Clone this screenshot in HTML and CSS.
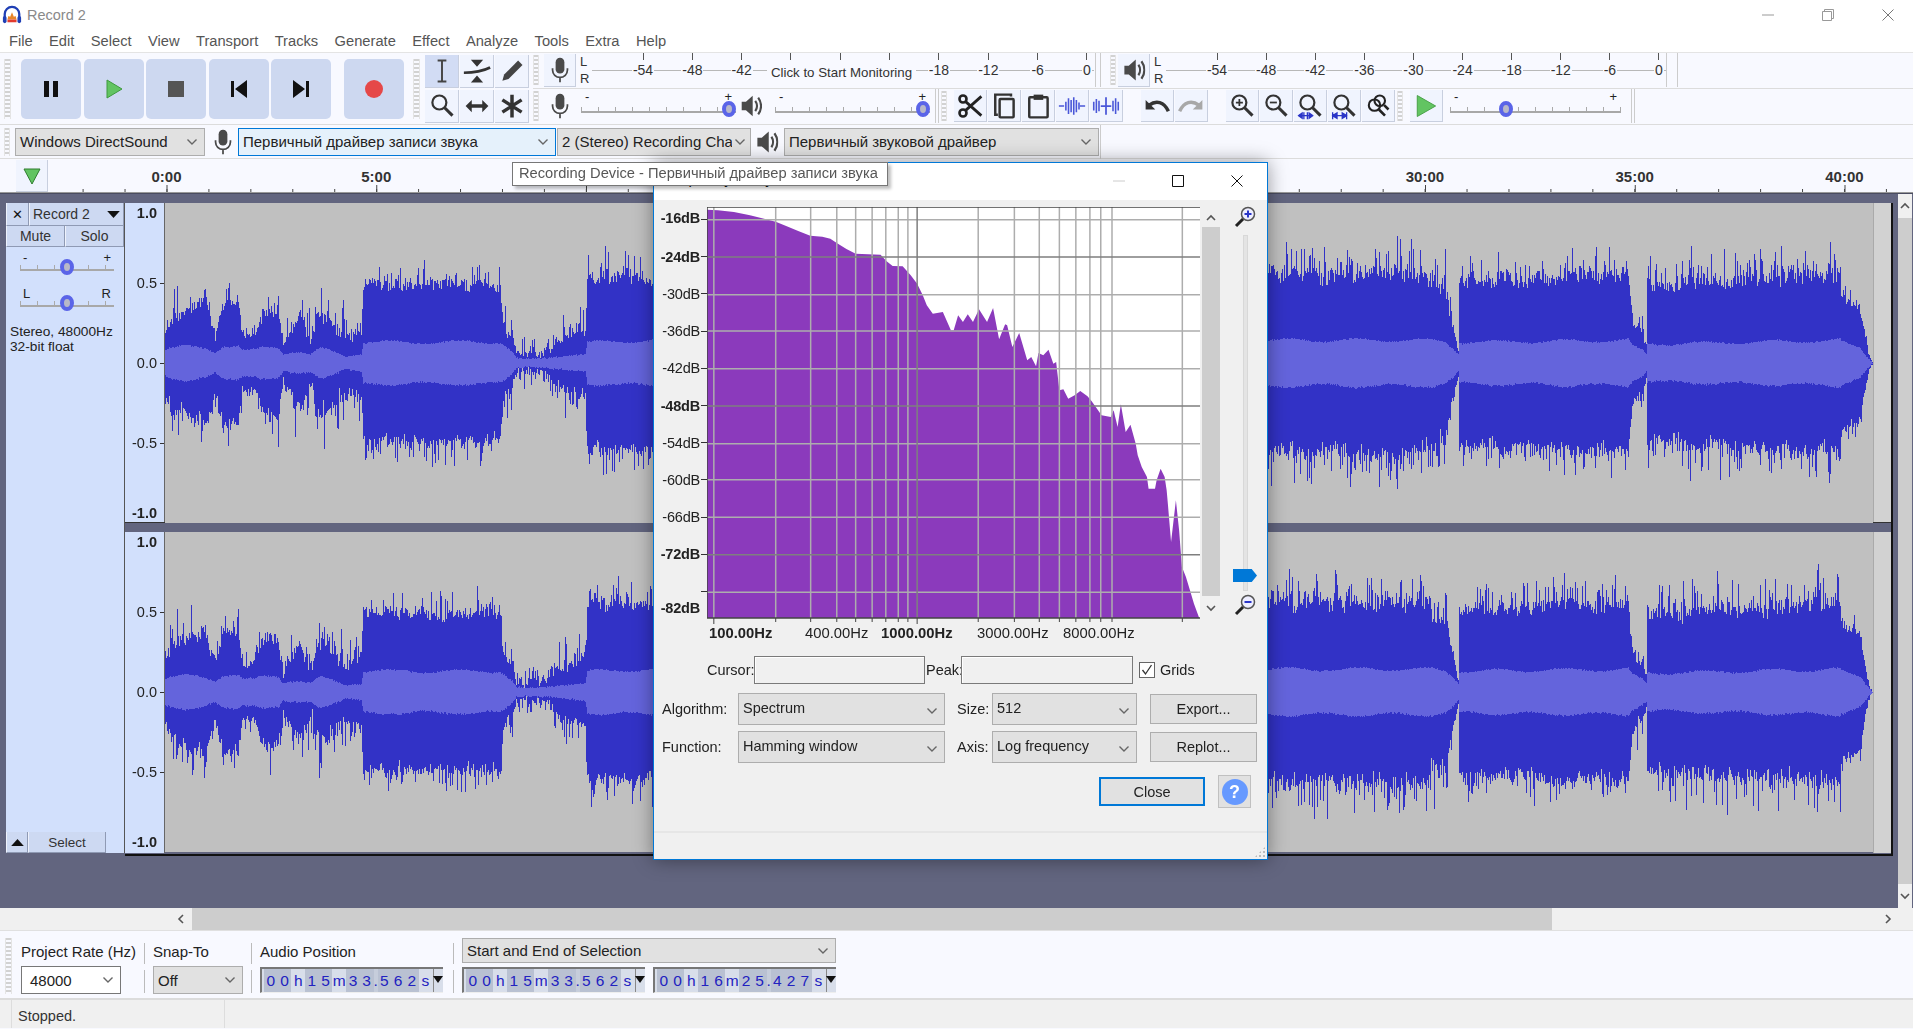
FILE: index.html
```html
<!DOCTYPE html>
<html lang="en">
<head>
    <meta charset="UTF-8">
    <title>Record 2</title>
    <link rel="stylesheet" href="styles.css">
</head>
<body>
    <svg class="defs" width="0" height="0">
        <symbol id="chev" viewBox="0 0 12 8"><path d="M1.5 1.5 6 6l4.5-4.5" fill="none" stroke="#666" stroke-width="1.4"/></symbol>
        <symbol id="mic" viewBox="0 0 24 32"><rect x="7" y="2" width="10" height="18" rx="5" fill="#4a4a4a"/><path d="M3.5 14v2a8.5 8.5 0 0 0 17 0v-2M12 25v5" fill="none" stroke="#4a4a4a" stroke-width="2"/></symbol>
        <symbol id="speaker" viewBox="0 0 26 32"><path d="M2 11h5l8-7v24l-8-7H2z" fill="#4a4a4a"/><path d="M18 10c2.5 3.500 2.500 8.500 0 12M21.500 6c4.500 6 4.500 14 0 20" fill="none" stroke="#4a4a4a" stroke-width="2.500"/></symbol>
        <symbol id="lens" viewBox="0 0 32 32"><circle cx="13" cy="12" r="8" fill="none" stroke="#333" stroke-width="2.500"/><path d="m19 18 9 9" stroke="#333" stroke-width="3.500"/></symbol>
    </svg>

    <div class="titlebar">
        <svg class="logo" viewBox="0 0 22 22">
            <path d="M3 15V10a8 8 0 0 1 16 0v5" fill="none" stroke="#1f3fb5" stroke-width="2.500"/>
            <rect x="1" y="12" width="4" height="8" rx="2" fill="#1f3fb5"/>
            <rect x="17" y="12" width="4" height="8" rx="2" fill="#1f3fb5"/>
            <path d="M6 16h10l-1-4-2 1-2-5-2 5-2-1z" fill="#e8862a"/>
            <path d="M6 16h10v3H6z" fill="#e23b2e"/>
        </svg>
        <span class="title-text">Record 2</span>
        <div class="win-buttons">
            <svg viewBox="0 0 12 12"><path d="M0 6h12" stroke="#999"/></svg>
            <svg viewBox="0 0 12 12"><path d="M.5 2.500h9v9h-9zM2.500 2.500V.5h9v9h-2" fill="none" stroke="#999"/></svg>
            <svg viewBox="0 0 12 12"><path d="m.5.5 11 11m0-11-11 11" stroke="#777"/></svg>
        </div>
    </div>

    <div class="menubar">
        <span>File</span><span>Edit</span><span>Select</span><span>View</span><span>Transport</span><span>Tracks</span><span>Generate</span><span>Effect</span><span>Analyze</span><span>Tools</span><span>Extra</span><span>Help</span>
    </div>

    <div class="toolbars">
        <div class="transport">
            <div class="grip"></div>
            <div class="big-btn"><svg viewBox="0 0 20 20"><path d="M3 2h5v16H3zM12 2h5v16h-5z" fill="#111"/></svg></div>
            <div class="big-btn"><svg viewBox="0 0 20 20"><path d="M3 1v18l15-9z" fill="#62c462" stroke="#3f9a3f"/></svg></div>
            <div class="big-btn"><svg viewBox="0 0 20 20"><path d="M2 2h16v16H2z" fill="#555"/></svg></div>
            <div class="big-btn"><svg viewBox="0 0 20 20"><path d="M2 2h3v16H2zM18 1v18L6 10z" fill="#111"/></svg></div>
            <div class="big-btn"><svg viewBox="0 0 20 20"><path d="M15 2h3v16h-3zM2 1v18l12-9z" fill="#111"/></svg></div>
            <div class="big-btn big-btn-rec"><svg viewBox="0 0 20 20"><circle cx="10" cy="10" r="9" fill="#e54848"/></svg></div>
            <div class="grip grip-tools"></div>
        </div>

        <div class="tools">
            <div class="tool tool-on"><svg viewBox="0 0 32 32"><path d="M11 4h10M11 28h10M16 4v24" fill="none" stroke="#444" stroke-width="2.200"/></svg></div>
            <div class="tool"><svg viewBox="0 0 32 32"><path d="M9 3h14l-7 8zM9 29h14l-7-8z" fill="#333"/><path d="M1 18c10 0 20-1 30-6" fill="none" stroke="#333" stroke-width="3"/></svg></div>
            <div class="tool"><svg viewBox="0 0 32 32"><path d="m5 27 2-7L23 4l5 5-16 16z" fill="#444"/></svg></div>
            <div class="tool"><svg viewBox="0 0 32 32"><use href="#lens"/></svg></div>
            <div class="tool"><svg viewBox="0 0 32 32"><path d="M3 16 10 9v5h12V9l7 7-7 7v-5H10v5z" fill="#333"/></svg></div>
            <div class="tool"><svg viewBox="0 0 32 32"><path d="M16 3v26M5 9l22 14M27 9 5 23" stroke="#333" stroke-width="4"/></svg></div>
        </div>

        <div class="stack">
            <div class="stack-row">
                <div class="grip grip-small"></div>
                <div class="meter-btn"><svg viewBox="0 0 24 32"><use href="#mic"/></svg></div>
                <div class="lr"><span>L</span><span>R</span></div>
                <div class="meter">
                    <div class="mark"><span>-54</span></div><div class="mark"><span>-48</span></div><div class="mark"><span>-42</span></div><div class="mark"><span>-36</span></div><div class="mark"><span>-30</span></div><div class="mark"><span>-24</span></div><div class="mark"><span>-18</span></div><div class="mark"><span>-12</span></div><div class="mark"><span>-6</span></div><div class="mark"><span>0</span></div>
                    <div class="monitor">Click to Start Monitoring</div>
                </div>
                <div class="dock-end"></div>
                <div class="grip grip-small grip-play"></div>
                <div class="meter-btn meter-btn-play"><svg viewBox="0 0 26 32"><use href="#speaker"/></svg></div>
                <div class="lr"><span>L</span><span>R</span></div>
                <div class="meter meter-play">
                    <div class="mark"><span>-54</span></div><div class="mark"><span>-48</span></div><div class="mark"><span>-42</span></div><div class="mark"><span>-36</span></div><div class="mark"><span>-30</span></div><div class="mark"><span>-24</span></div><div class="mark"><span>-18</span></div><div class="mark"><span>-12</span></div><div class="mark"><span>-6</span></div><div class="mark"><span>0</span></div>
                </div>
                <div class="dock-end dock-end-wide"></div>
            </div>
            <div class="stack-row">
                <div class="grip grip-small"></div>
                <svg class="mix-icon mix-mic" viewBox="0 0 24 32"><use href="#mic"/></svg>
                <div class="slider slider-rec">
                    <div class="slider-signs"><span>-</span><span>+</span></div>
                    <div class="rail"><i class="thumb thumb-end"></i></div>
                </div>
                <svg class="mix-icon mix-spk" viewBox="0 0 26 32"><use href="#speaker"/></svg>
                <div class="slider slider-out">
                    <div class="slider-signs"><span>-</span><span>+</span></div>
                    <div class="rail"><i class="thumb thumb-end"></i></div>
                </div>
                <div class="dock-end dock-end-mix"></div>
                <div class="grip grip-small grip-edit"></div>
                <div class="edit-btn first"><svg viewBox="0 0 32 32"><circle cx="8" cy="8" r="4" fill="none" stroke="#222" stroke-width="3"/><circle cx="8" cy="24" r="4" fill="none" stroke="#222" stroke-width="3"/><path d="M11 11 29 27M11 21 29 5" stroke="#222" stroke-width="3.200"/></svg></div>
                <div class="edit-btn"><svg viewBox="0 0 32 32"><path d="M24 5V3H6v23h3" fill="none" stroke="#333" stroke-width="2.800"/><rect x="11" y="8" width="16" height="21" rx="1" fill="none" stroke="#333" stroke-width="2.800"/></svg></div>
                <div class="edit-btn"><svg viewBox="0 0 32 32"><rect x="6" y="6" width="21" height="23" rx="1" fill="none" stroke="#333" stroke-width="2.800"/><path d="M11 3h11v6H11z" fill="#333"/></svg></div>
                <div class="edit-btn"><svg viewBox="0 0 32 32"><path d="M1 16h6M25 16h6" stroke="#4a57d8" stroke-width="1.500"/><path d="M9 11v10M12 7v18M15 9v14M18 6v20M21 9v14M24 12v8" stroke="#4a57d8" stroke-width="1.800"/></svg></div>
                <div class="edit-btn"><svg viewBox="0 0 32 32"><path d="M2 11v10M5 8v16M8 10v12M24 10v12M27 7v18M30 11v10" stroke="#4a57d8" stroke-width="1.800"/><path d="M16 6v20M10 16h12" stroke="#4a57d8" stroke-width="2"/></svg></div>
                <div class="edit-btn gap-left"><svg viewBox="0 0 32 32"><path d="M3 9v11h11z" fill="#333"/><path d="M7 15c8-6 17-4 22 7" fill="none" stroke="#333" stroke-width="4"/></svg></div>
                <div class="edit-btn"><svg viewBox="0 0 32 32"><path d="M29 9v11H18z" fill="#a8a8a8"/><path d="M25 15c-8-6-17-4-22 7" fill="none" stroke="#a8a8a8" stroke-width="4"/></svg></div>
                <div class="edit-btn gap-left"><svg viewBox="0 0 32 32"><use href="#lens"/><path d="M13 8v8M9 12h8" stroke="#333" stroke-width="2"/></svg></div>
                <div class="edit-btn"><svg viewBox="0 0 32 32"><use href="#lens"/><path d="M9 12h8" stroke="#333" stroke-width="2"/></svg></div>
                <div class="edit-btn"><svg viewBox="0 0 32 32"><use href="#lens"/><path d="M3 27h16M3 27l4-3v6zM19 27l-4-3v6zM9 23v8M13 23v8" fill="#2a35c8" stroke="#2a35c8" stroke-width="1.500"/></svg></div>
                <div class="edit-btn"><svg viewBox="0 0 32 32"><use href="#lens"/><path d="M3 27h16M3 23v8M19 23v8M3 27l5-3v6zM19 27l-5-3v6z" fill="#2a35c8" stroke="#2a35c8" stroke-width="1.500"/></svg></div>
                <div class="edit-btn"><svg viewBox="0 0 32 32"><circle cx="18" cy="10" r="6" fill="none" stroke="#222" stroke-width="2.400"/><circle cx="12" cy="15" r="6.500" fill="none" stroke="#222" stroke-width="2.400"/><path d="m17 20 7 7M23 15l5 5" stroke="#222" stroke-width="3"/></svg></div>
                <div class="grip grip-small grip-speed"></div>
                <div class="edit-btn speed-play"><svg viewBox="0 0 32 32"><path d="M6 4v24l21-12z" fill="#62c462" stroke="#3f9a3f"/></svg></div>
                <div class="slider slider-speed">
                    <div class="slider-signs"><span>-</span><span>+</span></div>
                    <div class="rail"><i class="thumb thumb-speed"></i></div>
                </div>
                <div class="dock-end dock-end-speed"></div>
            </div>
        </div>
    </div>

    <div class="devicebar">
        <div class="grip grip-device"></div>
        <div class="combo combo-host">Windows DirectSound<svg><use href="#chev"/></svg></div>
        <svg class="dev-icon" viewBox="0 0 24 32"><use href="#mic"/></svg>
        <div class="combo combo-rec">Первичный драйвер записи звука<svg><use href="#chev"/></svg></div>
        <div class="combo combo-chan"><span class="clip">2 (Stereo) Recording Channels</span><svg><use href="#chev"/></svg></div>
        <svg class="dev-icon dev-icon-out" viewBox="0 0 26 32"><use href="#speaker"/></svg>
        <div class="combo combo-out">Первичный звуковой драйвер<svg><use href="#chev"/></svg></div>
        <div class="dock-end dock-end-device"></div>
    </div>

    <div class="ruler">
        <div class="ruler-btn"><svg viewBox="0 0 20 20"><path d="M2 3h16l-8 15z" fill="#62c462" stroke="#2f7d2f"/></svg></div>
        <div class="ruler-scale">
            <span>0:00</span><span>5:00</span><span>10:00</span><span>15:00</span><span>20:00</span><span>25:00</span><span>30:00</span><span>35:00</span><span>40:00</span>
        </div>
    </div>

    <div class="tracks">
        <div class="track-panel">
            <div class="panel-head">
                <div class="panel-btn panel-close">✕</div>
                <div class="panel-btn panel-name">Record 2<svg viewBox="0 0 14 10"><path d="M0 1h14L7 9z" fill="#111"/></svg></div>
            </div>
            <div class="panel-head panel-row">
                <div class="panel-btn panel-half">Mute</div>
                <div class="panel-btn panel-half">Solo</div>
            </div>
            <div class="slider panel-slider">
                <div class="slider-signs"><span>-</span><span>+</span></div>
                <div class="rail"><i class="thumb thumb-mid"></i></div>
            </div>
            <div class="slider panel-slider panel-pan">
                <div class="slider-signs"><span>L</span><span>R</span></div>
                <div class="rail"><i class="thumb thumb-mid"></i></div>
            </div>
            <div class="panel-info">Stereo, 48000Hz<br>32-bit float</div>
            <div class="panel-foot">
                <div class="panel-btn panel-up"><svg viewBox="0 0 14 10"><path d="M0 9h14L7 1z" fill="#111"/></svg></div>
                <div class="panel-btn panel-select">Select</div>
            </div>
        </div>
        <div class="channels">
            <div class="channel">
                <div class="amp-ruler">
                    <span class="amp-top">1.0</span><span class="amp-far">0.5</span><span>0.0</span><span>-0.5</span><span class="amp-far">-1.0</span>
                </div>
                <canvas class="wave" width="1708" height="320" data-seed="11"></canvas>
                <div class="strip"></div>
            </div>
            <div class="channel">
                <div class="amp-ruler">
                    <span class="amp-top">1.0</span><span class="amp-far">0.5</span><span>0.0</span><span>-0.5</span><span class="amp-far">-1.0</span>
                </div>
                <canvas class="wave" width="1708" height="320" data-seed="29"></canvas>
                <div class="strip"></div>
            </div>
        </div>
        <div class="v-scroll">
            <svg viewBox="0 0 12 8"><path d="M2 6l4-4 4 4" fill="none" stroke="#555" stroke-width="1.600"/></svg>
            <div class="v-thumb"></div>
            <svg viewBox="0 0 12 8"><path d="M2 2l4 4 4-4" fill="none" stroke="#555" stroke-width="1.600"/></svg>
        </div>
    </div>

    <div class="h-scroll">
        <svg viewBox="0 0 8 12"><path d="M6 2 2 6l4 4" fill="none" stroke="#555" stroke-width="1.600"/></svg>
        <div class="h-thumb"></div>
        <svg viewBox="0 0 8 12"><path d="m2 2 4 4-4 4" fill="none" stroke="#555" stroke-width="1.600"/></svg>
    </div>

    <div class="selbar">
        <div class="grip grip-sel"></div>
        <div class="sel-col sel-rate">
            <label>Project Rate (Hz)</label>
            <div class="combo combo-white">48000<svg><use href="#chev"/></svg></div>
        </div>
        <div class="sel-sep"></div>
        <div class="sel-col sel-snap">
            <label>Snap-To</label>
            <div class="combo">Off<svg><use href="#chev"/></svg></div>
        </div>
        <div class="sel-sep"></div>
        <div class="sel-col sel-pos">
            <label>Audio Position</label>
            <div class="timebox"><b>0</b><b>0</b><em>h</em><b>1</b><b>5</b><em>m</em><b>3</b><b>3</b><i>.</i><b>5</b><b>6</b><b>2</b><em>s</em><u></u></div>
        </div>
        <div class="sel-sep"></div>
        <div class="sel-col sel-range">
            <div class="combo">Start and End of Selection<svg><use href="#chev"/></svg></div>
            <div class="sel-times">
                <div class="timebox"><b>0</b><b>0</b><em>h</em><b>1</b><b>5</b><em>m</em><b>3</b><b>3</b><i>.</i><b>5</b><b>6</b><b>2</b><em>s</em><u></u></div>
                <div class="timebox"><b>0</b><b>0</b><em>h</em><b>1</b><b>6</b><em>m</em><b>2</b><b>5</b><i>.</i><b>4</b><b>2</b><b>7</b><em>s</em><u></u></div>
            </div>
        </div>
    </div>

    <div class="statusbar"><span>Stopped.</span></div>

    <!-- spectrum window -->
    <div class="dialog">
        <div class="dialog-title">
            <span>Frequency Analysis</span>
            <div class="dialog-buttons">
                <svg viewBox="0 0 12 12"><path d="M0 6h12" stroke="#ccc"/></svg>
                <svg viewBox="0 0 12 12"><path d="M.5.5h11v11H.5z" fill="none" stroke="#111"/></svg>
                <svg viewBox="0 0 12 12"><path d="m.5.5 11 11m0-11-11 11" stroke="#111"/></svg>
            </div>
        </div>
        <div class="plot-row">
            <div class="db-axis">
                <div class="db db-bold"><span class="db-up">-16dB</span></div><div class="db db-bold">-24dB</div><div class="db">-30dB</div><div class="db">-36dB</div><div class="db">-42dB</div><div class="db db-bold">-48dB</div><div class="db">-54dB</div><div class="db">-60dB</div><div class="db">-66dB</div><div class="db db-bold">-72dB</div><div class="db"></div><div class="db db-bold db-last">-82dB</div>
            </div>
            <svg class="plot" viewBox="143 140 1227 1251" preserveAspectRatio="none">
                <rect x="143" y="140" width="1227" height="1233" fill="#fff"/>
                <polygon fill="#8b3abc" points="143,148 170,150 210,155 250,165 290,177 314,184 340,197 370,212 400,226 430,229 450,235 466,248 490,266 513,280 575,283 590,303 605,317 630,318 650,345 666,370 680,405 690,435 705,460 730,455 750,510 757,510 768,465 780,485 792,462 805,485 820,447 840,485 855,443 870,537 885,492 890,495 903,560 920,518 940,600 950,590 962,618 968,578 980,585 993,568 1005,610 1012,605 1020,690 1030,687 1042,715 1058,705 1072,692 1090,708 1100,722 1125,765 1148,770 1155,750 1165,800 1173,732 1185,815 1197,793 1210,850 1215,885 1225,920 1238,950 1242,985 1258,985 1262,960 1272,925 1282,950 1287,990 1290,1030 1298,1145 1310,1020 1318,1110 1325,1220 1335,1250 1345,1290 1355,1330 1368,1373 143,1373"/>
                <g class="grid">
                    <path d="M160 140V1373M314 140V1373M401 140V1373M466 140V1373M513 140V1373M554 140V1373M588 140V1373M619 140V1373M643 140V1373M818 140V1373M908 140V1373M970 140V1373M1020 140V1373M1061 140V1373M1096 140V1373M1123 140V1373M1151 140V1373M1326 140V1373"/>
                    <path d="M143 178H1370M143 403H1370M143 512H1370M143 625H1370M143 850H1370M143 958H1370M143 1071H1370M143 1296H1370"/>
                </g>
                <path class="grid-major" d="M666 140V1373M143 290H1370M143 737H1370M143 1183H1370"/>
                <path class="plot-frame" d="M1370 140H143V1373H1370"/>
                <path class="plot-ticks" d="M160 1373v18M314 1373v12M401 1373v12M466 1373v12M513 1373v12M554 1373v12M588 1373v12M619 1373v12M643 1373v12M666 1373v18M818 1373v12M908 1373v12M970 1373v12M1020 1373v12M1061 1373v12M1096 1373v12M1123 1373v12M1151 1373v12M1326 1373v12"/>
            </svg>
            <div class="plot-scroll">
                <svg viewBox="0 0 12 8"><path d="M2 6l4-4 4 4" fill="none" stroke="#555" stroke-width="1.600"/></svg>
                <div class="plot-thumb"></div>
                <svg viewBox="0 0 12 8"><path d="M2 2l4 4 4-4" fill="none" stroke="#555" stroke-width="1.600"/></svg>
            </div>
            <div class="zoom-col">
                <svg viewBox="0 0 24 24"><circle cx="15" cy="9" r="6.500" fill="#eef" stroke="#555" stroke-width="1.500"/><path d="m10 14-7 7" stroke="#222" stroke-width="3"/><path d="M15 5.500v7M11.500 9h7" stroke="#2a35c8" stroke-width="2"/></svg>
                <div class="zoom-rail"></div>
                <div class="zoom-thumb"></div>
                <svg viewBox="0 0 24 24"><circle cx="15" cy="9" r="6.500" fill="#eef" stroke="#555" stroke-width="1.500"/><path d="m10 14-7 7" stroke="#222" stroke-width="3"/><path d="M11.500 9h7" stroke="#2a35c8" stroke-width="2"/></svg>
            </div>
        </div>
        <div class="freq-row">
            <b class="f1">100.00Hz</b><span class="f2">400.00Hz</span><b class="f3">1000.00Hz</b><span class="f4">3000.00Hz</span><span>8000.00Hz</span>
        </div>
        <div class="cursor-row">
            <span class="lbl-cursor">Cursor:</span>
            <div class="readout readout-a"></div>
            <span class="lbl-peak">Peak:</span>
            <div class="readout readout-b"></div>
            <div class="check"><svg viewBox="0 0 14 14"><path d="m2.500 7 3 4 6-9" fill="none" stroke="#333" stroke-width="1.300"/></svg></div>
            <span>Grids</span>
        </div>
        <div class="form-row form-first">
            <span class="lbl-form">Algorithm:</span>
            <div class="combo combo-form">Spectrum<svg><use href="#chev"/></svg></div>
            <span class="lbl-small">Size:</span>
            <div class="combo combo-size">512<svg><use href="#chev"/></svg></div>
            <div class="push">Export...</div>
        </div>
        <div class="form-row">
            <span class="lbl-form">Function:</span>
            <div class="combo combo-form">Hamming window<svg><use href="#chev"/></svg></div>
            <span class="lbl-small">Axis:</span>
            <div class="combo combo-size">Log frequency<svg><use href="#chev"/></svg></div>
            <div class="push">Replot...</div>
        </div>
        <div class="close-row">
            <div class="push push-default">Close</div>
            <div class="help-btn"><span>?</span></div>
        </div>
        <div class="dialog-foot"><div class="size-grip"></div></div>
    </div>

    <div class="tooltip">Recording Device - Первичный драйвер записи звука</div>

    <script src="wave.js"></script>
</body>
</html>
```

FILE: styles.css
```css
* {
    box-sizing: border-box;
}
body {
    margin: 0;
    width: 1913px;
    height: 1029px;
    overflow: hidden;
    position: relative;
    font-family: "Liberation Sans", Arial, "Noto Sans CJK SC", sans-serif;
    font-size: 15px;
    color: #333;
    background: #f8f9ff;
}
.defs {
    position: absolute;
}

/* title and menu */
.titlebar {
    height: 32px;
    background: #fff;
    display: flex;
    align-items: center;
    padding: 0 0 3px 2px;
}
.logo {
    width: 20px;
    height: 20px;
}
.title-text {
    margin-left: 5px;
    color: #8a8a8a;
    font-size: 14.5px;
}
.win-buttons {
    margin-left: auto;
    display: flex;
    gap: 48px;
    padding-right: 19px;
}
.win-buttons svg {
    width: 12px;
    height: 12px;
}
.menubar {
    height: 21px;
    background: #fff;
    display: flex;
    gap: 16.400px;
    padding: 1px 0 0 9px;
    color: #555;
    font-size: 14.7px;
    border-bottom: 1px solid #e4e4e4;
}

/* top toolbars */
.toolbars {
    height: 72px;
    display: flex;
    border-bottom: 1px solid #dcdcdc;
}
.grip {
    width: 7px;
    background: repeating-linear-gradient(#d2d2d2 0 2px, transparent 2px 4px);
    border-left: 1px solid #e4e4e4;
    border-right: 1px solid #e4e4e4;
}
.transport {
    width: 425px;
    display: flex;
    padding: 6px 0 5px 4px;
}
.big-btn {
    width: 60px;
    margin-left: 2.500px;
    background: #cdd8f0;
    border-radius: 5px;
    display: flex;
    align-items: center;
    justify-content: center;
}
.grip + .big-btn {
    margin-left: 10px;
}
.big-btn svg {
    width: 20px;
    height: 20px;
}
.big-btn-rec {
    margin-left: 13px;
}
.grip-tools {
    margin-left: 9px;
}
.tools {
    width: 108px;
    padding: 2px 5px 0 0;
    display: grid;
    grid-template-columns: repeat(3, 34px);
    grid-template-rows: 33px 33px;
    gap: 2px 1px;
}
.tool {
    background: #f0f4fe;
    border-right: 1px solid #c8cfdf;
    border-bottom: 1px solid #c8cfdf;
    display: flex;
    align-items: center;
    justify-content: center;
}
.tool svg {
    width: 28px;
    height: 28px;
}
.tool-on {
    background: #d2dcf4;
}
.stack {
    flex: 1;
    display: flex;
    flex-direction: column;
}
.stack-row {
    height: 36px;
    display: flex;
    align-items: center;
    border-bottom: 1px solid #dcdcdc;
}
.stack-row:last-child {
    border-bottom: none;
}
.stack-row .grip-small {
    height: 30px;
    width: 6px;
}
.meter-btn {
    width: 32px;
    height: 33px;
    margin-left: 5px;
    background: #f0f4fe;
    border-right: 1px solid #c8cfdf;
    border-bottom: 1px solid #c8cfdf;
    display: flex;
    align-items: center;
    justify-content: center;
}
.meter-btn svg {
    width: 24px;
    height: 28px;
}
.meter-btn-play {
    margin-left: 2px;
}
.grip-play {
    margin-left: 9px;
}
.lr {
    width: 12px;
    margin-left: 4px;
    display: flex;
    flex-direction: column;
    font-size: 13px;
    line-height: 17px;
    color: #333;
}
.meter {
    position: relative;
    width: 502px;
    height: 34px;
    padding-left: 44px;
    display: flex;
    justify-content: space-between;
    background: linear-gradient(#b8b8b8, #b8b8b8) 0 17px / 100% 1px no-repeat;
}
.meter-play {
    width: 500px;
}
.mark {
    width: 14px;
    display: flex;
    flex-direction: column;
    align-items: center;
    font-size: 14px;
    color: #333;
}
.mark::before {
    content: "";
    width: 1px;
    height: 7px;
    flex: none;
    background: #555;
}
.mark span {
    margin-top: 3px;
    padding: 0 1px;
    line-height: 15px;
    background: #f8f9ff;
    white-space: nowrap;
}
.monitor {
    position: absolute;
    left: 175px;
    top: 10px;
    width: 149px;
    height: 18px;
    line-height: 19px;
    text-align: center;
    font-size: 13.300px;
    background: #f8f9ff;
    white-space: nowrap;
}
.dock-end {
    width: 6px;
    height: 34px;
    margin-left: 1px;
    border-left: 1px solid #ccc;
    border-right: 1px solid #ccc;
}
.dock-end-wide {
    width: 12px;
    margin-left: 0;
}
.mix-icon {
    width: 22px;
    height: 28px;
}
.mix-mic {
    margin-left: 10px;
}
.mix-spk {
    margin-left: 4px;
}
.slider {
    height: 30px;
    display: flex;
    flex-direction: column;
    font-size: 13px;
    color: #222;
}
.slider-signs {
    height: 14px;
    line-height: 12px;
    display: flex;
    justify-content: space-between;
    padding: 0 4px;
}
.rail {
    position: relative;
    height: 8px;
    border-bottom: 2px solid #a8a8a8;
    background: repeating-linear-gradient(to right, #aaa 0 1px, transparent 1px 17px) 0 2px / 100% 4px no-repeat;
}
.thumb {
    position: absolute;
    top: -4px;
    width: 14px;
    height: 16px;
    border-radius: 50%;
    border: 4px solid #5a64e8;
    background: #b8b8c8;
}
.thumb-end {
    right: 0;
}
.thumb-mid {
    left: 40px;
}
.thumb-speed {
    left: 49px;
}
.slider-rec {
    width: 155px;
    margin-left: 10px;
}
.slider-out {
    width: 155px;
    margin-left: 13px;
}
.slider-speed {
    width: 171px;
    margin-left: 7px;
}
.dock-end-mix {
    width: 4px;
    margin-left: 5px;
}
.grip-edit {
    margin-left: 2px;
    margin-right: 6px;
}
.edit-btn {
    width: 33px;
    height: 32px;
    margin-left: 1px;
    background: #f0f4fe;
    border-right: 1px solid #c8cfdf;
    border-bottom: 1px solid #c8cfdf;
    display: flex;
    align-items: center;
    justify-content: center;
}
.edit-btn svg {
    width: 28px;
    height: 28px;
}
.edit-btn.gap-left {
    margin-left: 18px;
}
.grip-speed {
    margin-left: 2px;
}
.edit-btn.speed-play {
    margin-left: 7px;
}
.dock-end-speed {
    width: 4px;
    margin-left: 10px;
}

/* device toolbar */
.devicebar {
    height: 34px;
    display: flex;
    align-items: center;
    padding-left: 4px;
    border-bottom: 1px solid #dcdcdc;
}
.grip-device {
    height: 28px;
    width: 6px;
}
.combo {
    height: 28px;
    display: flex;
    align-items: center;
    justify-content: space-between;
    padding: 0 6px 0 4px;
    background: #e1e1e1;
    border: 1px solid #adadad;
    color: #222;
    white-space: nowrap;
}
.combo svg {
    width: 12px;
    height: 8px;
    flex: none;
}
.combo-host {
    width: 190px;
    margin-left: 5px;
}
.dev-icon {
    width: 22px;
    height: 28px;
    margin-left: 7px;
}
.combo-rec {
    width: 318px;
    margin-left: 4px;
    background: #e5f1fb;
    border-color: #0078d7;
}
.combo-chan {
    width: 194px;
    margin-left: 1px;
    padding-right: 4px;
}
.clip {
    width: 170px;
    overflow: hidden;
}
.dev-icon-out {
    margin-left: 4px;
    width: 24px;
}
.combo-out {
    width: 315px;
    margin-left: 5px;
}
.dock-end-device {
    margin-left: 1px;
    width: 2px;
    border-right: none;
}

/* timeline ruler */
.ruler {
    height: 34px;
    display: flex;
    padding: 1px 0 0 16px;
    border-bottom: 1px solid #999;
}
.ruler-btn {
    width: 32px;
    height: 32px;
    background: #f0f4fe;
    border-right: 1px solid #c8cfdf;
    border-bottom: 1px solid #c8cfdf;
    display: flex;
    align-items: center;
    justify-content: center;
    flex: none;
}
.ruler-btn svg {
    width: 20px;
    height: 20px;
}
.ruler-scale {
    flex: 1;
    display: flex;
    padding-left: 13.600px;
    background:
        linear-gradient(to right, #444 1px, transparent 1px) 118.500px 100% / 209.750px 7px repeat-x,
        linear-gradient(to right, #444 1px, transparent 1px) 34.600px 100% / 41.950px 3px repeat-x;
}
.ruler-scale span {
    width: 209.750px;
    flex: none;
    text-align: center;
    font-weight: bold;
    color: #333;
    line-height: 34px;
    height: 28px;
}

/* tracks */
.tracks {
    height: 715px;
    background: #62657f;
    display: flex;
    padding: 9px 0 0 6px;
    border-top: 1px solid #4a4c60;
}
.track-panel {
    width: 119px;
    height: 650px;
    background: #d2e0fc;
    border-right: 1px solid #555;
    display: flex;
    flex-direction: column;
    font-size: 14px;
}
.panel-head {
    display: flex;
    height: 23px;
}
.panel-row {
    height: 21px;
}
.panel-btn {
    background: #cdd9f2;
    border-right: 1px solid #8f9ab4;
    border-bottom: 1px solid #8f9ab4;
    border-left: 1px solid #eef2fc;
    display: flex;
    align-items: center;
    justify-content: center;
}
.panel-close {
    width: 23px;
    color: #111;
    font-size: 13px;
}
.panel-name {
    flex: 1;
    justify-content: space-between;
    padding: 0 3px;
}
.panel-name svg {
    width: 13px;
    height: 9px;
}
.panel-half {
    flex: 1;
}
.panel-slider {
    width: 94px;
    margin: 5px 0 0 14px;
    height: 23px;
}
.panel-slider .slider-signs {
    height: 11px;
    padding: 0 3px;
}
.panel-pan {
    margin-top: 12.600px;
}
.panel-info {
    margin: 13px 0 0 4px;
    line-height: 15.500px;
    color: #222;
    font-size: 13.700px;
}
.panel-foot {
    margin-top: auto;
    display: flex;
    height: 21px;
    font-size: 13.500px;
}
.panel-up {
    width: 22px;
}
.panel-up svg {
    width: 13px;
    height: 9px;
}
.panel-select {
    width: 78px;
}
.channels {
    width: 1768px;
    display: flex;
    flex-direction: column;
    gap: 9px;
    border-right: 2px solid #111;
    height: 653px;
    border-bottom: 2px solid #111;
}
.channel {
    height: 320px;
    display: flex;
    border-bottom: 1px solid #333;
}
.channel:last-child {
    height: 321px;
    border-bottom: none;
}
.amp-ruler {
    width: 40px;
    flex: none;
    background: #d2e0fc;
    display: flex;
    flex-direction: column;
    align-items: flex-end;
    border-right: 1px solid #666;
    font-size: 14.500px;
    color: #222;
}
.amp-ruler span {
    height: 20px;
    line-height: 20px;
    margin-top: 60px;
    padding-right: 7px;
    position: relative;
}
.amp-ruler span::after {
    content: "";
    position: absolute;
    right: 0;
    top: 10px;
    width: 4px;
    height: 1px;
    background: #333;
}
.amp-ruler .amp-top,
.amp-ruler .amp-far:last-child {
    font-weight: bold;
}
.amp-ruler .amp-top {
    margin-top: 0;
}
.amp-ruler .amp-top::after,
.amp-ruler .amp-far:last-child::after {
    display: none;
}
.amp-ruler .amp-far {
    margin-top: 50px;
}
.wave {
    width: 1708px;
    height: 320px;
    background: #c0c0c0;
    flex: none;
}
.strip {
    flex: 1;
    background: #d2d2d2;
    border-left: 1px solid #aaa;
}
.v-scroll {
    width: 14px;
    margin-left: 5px;
    margin-top: -9px;
    background: #f0f0f0;
    display: flex;
    flex-direction: column;
    align-items: center;
}
.v-scroll svg {
    width: 12px;
    height: 8px;
    margin: 8px 0;
    flex: none;
}
.v-thumb {
    flex: 1;
    width: 100%;
    background: #cdcdcd;
}
.h-scroll {
    height: 22px;
    background: #f0f0f0;
    display: flex;
    align-items: center;
    padding-left: 177px;
    padding-right: 20px;
}
.h-scroll svg {
    width: 8px;
    height: 12px;
    flex: none;
}
.h-thumb {
    width: 1360px;
    height: 100%;
    margin: 0 332px 0 7px;
    background: #cdcdcd;
}

/* selection toolbar */
.selbar {
    height: 70px;
    display: flex;
    padding: 7px 0 4px 5px;
    border-top: 1px solid #e0e0e0;
    border-bottom: 2px solid #dcdcdc;
}
.grip-sel {
    width: 7px;
    margin-right: 9px;
}
.sel-col {
    display: flex;
    flex-direction: column;
    justify-content: flex-end;
}
.sel-col label {
    height: 28px;
    line-height: 27px;
    white-space: nowrap;
    color: #222;
}
.sel-rate {
    width: 100px;
}
.combo-white {
    background: #fff;
    border-color: #777;
    padding-left: 8px;
}
.sel-sep {
    width: 1px;
    height: 50px;
    margin: 5px 8px 0 23px;
    background: linear-gradient(#bbb 0 21px, transparent 21px 27px, #bbb 27px);
}
.sel-snap {
    width: 90px;
}
.sel-snap + .sel-sep {
    margin-left: 8px;
}
.sel-pos {
    width: 183px;
}
.sel-pos label {
    line-height: 25px;
}
.sel-pos + .sel-sep {
    margin-left: 10px;
}
.sel-range {
    width: 374px;
    gap: 4px;
}
.sel-times {
    display: flex;
    justify-content: space-between;
}
.sel-range .timebox {
    width: 183px;
}
.timebox {
    height: 26px;
    margin-bottom: 1px;
    display: flex;
    align-items: center;
    padding-left: 2px;
    background: #d8deea;
    border-top: 2px solid #777;
    border-left: 2px solid #777;
    border-bottom: 1px solid #eee;
    color: #2222c0;
    font-size: 15.500px;
    line-height: 24px;
}
.timebox b,
.timebox em,
.timebox i {
    flex: none;
    font-weight: normal;
    font-style: normal;
    text-align: center;
}
.timebox b {
    width: 13.700px;
    height: 100%;
    background: #b9c1d2;
}
.timebox em {
    width: 13.700px;
    height: 100%;
}
.timebox i {
    width: 4px;
    height: 100%;
    background: #c6cddb;
}
.timebox u {
    margin-left: auto;
    width: 10px;
    height: 100%;
    flex: none;
    background: #d8deea;
    border-left: 1px solid #888;
    position: relative;
}
.timebox u::after {
    content: "";
    position: absolute;
    left: -1px;
    top: 7px;
    border: 5px solid transparent;
    border-top: 7px solid #111;
    border-bottom: none;
}
.statusbar {
    height: 28px;
    background: #f0f0f0;
    padding-left: 11px;
    color: #333;
    font-size: 14.500px;
}
.statusbar span {
    display: block;
    width: 214px;
    height: 100%;
    padding: 8px 0 0 6px;
    border-left: 1px solid #ddd;
    border-right: 1px solid #ddd;
}

/* spectrum window, floats over the project */
.dialog {
    position: absolute;
    left: 653px;
    top: 162px;
    width: 615px;
    height: 698px;
    background: #f0f0f0;
    border: 1px solid #0078d7;
    box-shadow: 0 0 18px rgba(0, 0, 0, 0.4);
    display: flex;
    flex-direction: column;
    color: #222;
    font-size: 14.500px;
}
.dialog-title {
    height: 37px;
    flex: none;
    background: #fff;
    display: flex;
    align-items: center;
    padding-left: 7px;
    font-size: 15px;
    color: #111;
}
.dialog-title span {
    margin-bottom: 7px;
}
.dialog-buttons {
    margin-left: auto;
    display: flex;
    gap: 47px;
    padding: 0 24px 2px 0;
}
.dialog-buttons svg {
    width: 12px;
    height: 12px;
}
.plot-row {
    display: flex;
    height: 424px;
    flex: none;
}
.db-axis {
    width: 53px;
    padding-top: 1px;
    flex: none;
}
.db {
    height: 37.200px;
    display: flex;
    align-items: center;
    justify-content: flex-end;
    letter-spacing: -0.2px;
}
.db::after {
    content: "";
    width: 6px;
    height: 1px;
    margin-left: 1px;
    background: #333;
}
.db-bold {
    font-weight: bold;
}
.db-up {
    margin-bottom: 4px;
}
.db-last {
    margin-top: -21px;
}
.db-last::after {
    background: transparent;
}
.plot {
    width: 493px;
    height: 417px;
    margin-top: 7px;
    flex: none;
}
.grid path {
    fill: none;
    stroke: #adadad;
    stroke-width: 1.500px;
    vector-effect: non-scaling-stroke;
}
.grid-major {
    fill: none;
    stroke: #7f7f7f;
    stroke-width: 1.500px;
    vector-effect: non-scaling-stroke;
}
.plot-frame {
    fill: none;
    stroke: #444;
    stroke-width: 1.500px;
    vector-effect: non-scaling-stroke;
}
.plot-ticks {
    fill: none;
    stroke: #444;
    stroke-width: 1px;
    vector-effect: non-scaling-stroke;
}
.plot-scroll {
    width: 18px;
    margin: 7px 0 0 2px;
    display: flex;
    flex-direction: column;
    align-items: center;
}
.plot-scroll svg {
    width: 12px;
    height: 8px;
    margin: 7px 0 5px;
    flex: none;
}
.plot-scroll svg:last-child {
    margin-top: 8px;
}
.plot-thumb {
    width: 100%;
    height: 369px;
    background: #cdcdcd;
}
.zoom-col {
    width: 24px;
    margin: 5px 0 0 13px;
    display: flex;
    flex-direction: column;
    align-items: center;
    position: relative;
}
.zoom-col svg {
    width: 24px;
    height: 24px;
    flex: none;
}
.zoom-rail {
    width: 5px;
    height: 356px;
    margin: 6px 0 2px;
    background: #e4e4e4;
    border: 1px solid #d8d8d8;
}
.zoom-thumb {
    position: absolute;
    left: 0;
    top: 364px;
    width: 24px;
    height: 13px;
    background: #0078d7;
    clip-path: polygon(0 0, 78% 0, 100% 50%, 78% 100%, 0 100%);
}
.freq-row {
    height: 18px;
    margin-top: 1px;
    padding-left: 55px;
    display: flex;
    font-size: 14.800px;
    white-space: nowrap;
    flex: none;
}
.freq-row b,
.freq-row span {
    display: block;
}
.f1 {
    width: 96px;
}
.f2 {
    width: 76px;
}
.f3 {
    width: 96px;
}
.f4 {
    width: 86px;
}
.cursor-row {
    height: 28px;
    margin-top: 13px;
    padding-left: 53px;
    display: flex;
    align-items: center;
    flex: none;
}
.lbl-cursor {
    width: 47px;
    white-space: nowrap;
}
.lbl-peak {
    width: 35px;
    margin-left: 1px;
}
.readout {
    height: 28px;
    background: #f0f0f0;
    border: 1px solid #7a7a7a;
    box-shadow: inset 1px 1px 0 #fff;
}
.readout-a {
    width: 171px;
}
.readout-b {
    width: 172px;
}
.check {
    width: 16px;
    height: 16px;
    margin: 0 5px 0 6px;
    background: #fff;
    border: 1px solid #666;
    display: flex;
}
.form-row {
    height: 32px;
    margin-top: 6px;
    padding-left: 8px;
    display: flex;
    align-items: center;
    flex: none;
}
.form-first {
    margin-top: 9px;
}
.form-row .combo {
    height: 32px;
    padding-bottom: 3px;
}
.form-row .combo svg {
    margin-top: 6px;
}
.lbl-form {
    width: 76px;
}
.combo-form {
    width: 207px;
}
.lbl-small {
    width: 35px;
    margin-left: 12px;
}
.combo-size {
    width: 145px;
}
.push {
    width: 107px;
    height: 30px;
    margin-left: 13px;
    background: #e1e1e1;
    border: 1px solid #adadad;
    display: flex;
    align-items: center;
    justify-content: center;
}
.close-row {
    margin-top: 12px;
    padding-right: 16px;
    display: flex;
    justify-content: flex-end;
    align-items: center;
    flex: none;
}
.push-default {
    width: 106px;
    height: 29px;
    margin-left: 0;
    border: 2px solid #0078d7;
}
.help-btn {
    width: 33px;
    height: 33px;
    margin-left: 13px;
    background: #e1e1e1;
    border: 1px solid #c0c0c0;
    display: flex;
    align-items: center;
    justify-content: center;
}
.help-btn span {
    width: 26px;
    height: 26px;
    border-radius: 50%;
    background: #6699ff;
    color: #fff;
    font-weight: bold;
    font-size: 18px;
    line-height: 26px;
    text-align: center;
}
.dialog-foot {
    margin-top: auto;
    height: 28px;
    border-top: 2px solid #e6e6e6;
    position: relative;
}
.size-grip {
    position: absolute;
    right: 1px;
    bottom: 1px;
    width: 12px;
    height: 12px;
    background: radial-gradient(circle, #bbb 1px, transparent 1.300px) 0 0 / 4px 4px;
    clip-path: polygon(100% 0, 100% 100%, 0 100%);
}
.tooltip {
    position: absolute;
    left: 512px;
    top: 162px;
    width: 376px;
    height: 24px;
    padding-left: 6px;
    line-height: 21px;
    background: #fff;
    border: 1px solid #777;
    color: #575757;
    font-size: 14.700px;
    white-space: nowrap;
    box-shadow: 3px 3px 3px rgba(0, 0, 0, 0.25);
}
```

FILE: wave.js
```js
// envelope of the recording: x on the canvas, solid level, spike level, rms level (px from centre)
var envelope = [
    [0, 30, 46, 12], [5, 36, 68, 14], [20, 50, 82, 16], [40, 58, 86, 14], [50, 26, 46, 10],
    [57, 58, 80, 16], [73, 58, 80, 16], [77, 26, 40, 12], [90, 26, 40, 12], [97, 48, 74, 15],
    [113, 48, 78, 15], [118, 16, 36, 8], [125, 30, 52, 10], [135, 44, 80, 10], [145, 16, 48, 8],
    [155, 48, 84, 14], [170, 34, 78, 10], [180, 24, 56, 6], [196, 30, 58, 8], [198, 76, 100, 20],
    [335, 76, 100, 20], [338, 34, 62, 18], [347, 20, 55, 10], [351, 7, 16, 4], [363, 5, 24, 3],
    [380, 7, 20, 4], [395, 24, 50, 6], [420, 30, 56, 8], [422, 84, 112, 20], [500, 84, 112, 22],
    [1103, 86, 118, 22], [1250, 86, 120, 22], [1267, 76, 120, 22], [1280, 68, 112, 20], [1288, 34, 42, 14],
    [1293, 10, 14, 8], [1294, 80, 108, 20], [1463, 86, 112, 22], [1467, 37, 62, 16], [1477, 25, 52, 12],
    [1481, 15, 20, 8], [1482, 76, 108, 18], [1675, 86, 122, 22], [1676, 68, 86, 20], [1695, 54, 72, 14],
    [1698, 35, 42, 10], [1703, 10, 15, 4], [1707, 0, 0, 0]
];

function levelsAt(x) {
    for (let i = 1; i < envelope.length; i++) {
        let a = envelope[i - 1], b = envelope[i];
        if (x <= b[0]) {
            let t = (x - a[0]) / (b[0] - a[0]);
            return [a[1] + (b[1] - a[1]) * t, a[2] + (b[2] - a[2]) * t, a[3] + (b[3] - a[3]) * t];
        }
    }
    return [0, 0, 0];
}

function drawWave(canvas) {
    let ctx = canvas.getContext("2d");
    let seed = parseInt(canvas.dataset.seed);
    let centre = canvas.height / 2;
    let block = 0;

    function rand() {
        seed = (seed * 16807) % 2147483647;
        return seed / 2147483647;
    }
    function swing(solid, spike) {
        let jag = spike > 0 ? (spike - solid) / spike : 0;
        let r = rand();
        return solid * (1 - jag * block) + (spike - solid) * (r * r * r * r * r + rand() * 0.4) + rand() * 4 - 2;
    }

    for (let x = 0; x < canvas.width; x++) {
        if (x % 4 == 0) block = rand() * 0.4;
        let levels = levelsAt(x);
        let up = Math.max(0, swing(levels[0], levels[1]));
        let down = Math.max(0, swing(levels[0], levels[1]));
        ctx.fillStyle = "#3232c6";
        ctx.fillRect(x, Math.round(centre - up), 1, Math.round(up + down));

        let rms = levels[2] * (1 + 0.08 * Math.sin(x / 11)) + rand() * 1.6;
        ctx.fillStyle = "#6464dc";
        ctx.fillRect(x, Math.round(centre - rms), 1, Math.round(rms * 2));
    }
}

document.querySelectorAll(".wave").forEach(drawWave);
```
